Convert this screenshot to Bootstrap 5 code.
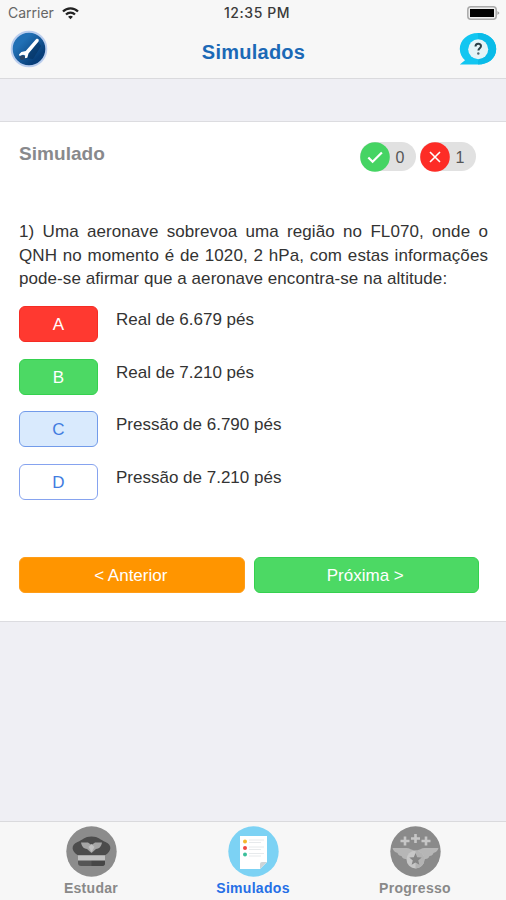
<!DOCTYPE html>
<html lang="pt-BR">
<head>
<meta charset="utf-8">
<meta name="viewport" content="width=device-width, initial-scale=1">
<title>Simulados</title>
<link href="https://cdn.jsdelivr.net/npm/bootstrap@5.3.0/dist/css/bootstrap.min.css" rel="stylesheet">
<style>
body{background:#efeff4;font-family:"Liberation Sans",Arial,sans-serif;font-size:17px;color:#333;height:900px;overflow:hidden}
svg{display:block;flex:none}
.top-area{height:79px;background:#f7f7f7;border-bottom:1px solid #dadadd}
.status-line{height:26px;padding:0 6px 0 8px;font-family:Inter,sans-serif;font-size:14px;line-height:26px}
.status-line .carrier{color:#666;width:46px}
.status-line .clock{width:70px;font-weight:500;color:#3a3a3a;letter-spacing:.55px;margin-left:6px}
.side{flex:1 1 0}
.title-line{height:52px;padding:0 9px 0 10px}
.title-line h1{font-size:20px;font-weight:700;color:#1b69b6;letter-spacing:.25px;line-height:52px}
.quiz{margin-top:42px;height:501px;background:#fff;border-top:1px solid #dcdce0;border-bottom:1px solid #dcdce0;padding:0 18px 0 19px}
.quiz-head{height:70px;padding-right:12px}
.quiz-head h2{font-size:19px;font-weight:700;color:#88898c;line-height:64px;letter-spacing:.05px}
.score{width:56px;height:29px;background:#e1e1e1;font-size:16px;margin-top:20px;color:#555}
.score span{flex:1;text-align:center;padding:2px 6px 0 0}
.question{margin:28px 0 15.500px;line-height:23.500px;text-align:justify;letter-spacing:.07px}
.answer{height:36px;margin-bottom:16.700px}
.answer p{line-height:27px;margin-left:18px}
.btn{--bs-btn-padding-y:0;--bs-btn-padding-x:0;--bs-btn-font-size:17px;--bs-btn-border-radius:6px;--bs-btn-color:#fff;height:36px;line-height:36px}
.answer .btn{width:79px}
.b-red{--bs-btn-bg:#ff3930;--bs-btn-border-color:#f52c24}
.b-green{--bs-btn-bg:#4cd964;--bs-btn-border-color:#35d14f}
.b-pick{--bs-btn-bg:#d9eafd;--bs-btn-border-color:#729bea;--bs-btn-color:#427ce0}
.b-line{--bs-btn-bg:#fff;--bs-btn-border-color:#86a3ef;--bs-btn-color:#427ce0}
.b-orange{--bs-btn-bg:#ff9500;--bs-btn-border-color:#ff9d18}
.pager{margin-top:57px;gap:9px;padding-right:9px}
.pager .btn{flex:1;padding-right:2px}
.tabs{height:79px;background:#f7f7f7;border-top:1px solid #dadadd;padding:4px 10px 0}
.tab{width:162px;font-size:14px;font-weight:700;letter-spacing:.3px;color:#898989;text-decoration:none;line-height:16px}
.tab span{margin-top:3px}
.tab.on{color:#256fe6}
</style>
</head>
<body class="d-flex flex-column">
<header class="top-area flex-shrink-0">
  <div class="status-line d-flex align-items-center">
    <div class="side d-flex align-items-center gap-2"><span class="carrier">Carrier</span>
      <svg width="17" height="13" viewBox="0 0 17 13" fill="none" stroke="#222" stroke-width="2.2"><path d="M1 4.6C5 .3 12 .3 16 4.6M4 7.5c2.5-2.6 6.500-2.600 9 0"/><path d="M8.500 12.300 6.100 9.800c1.300-1.300 3.500-1.300 4.800 0z" fill="#222" stroke="none"/></svg>
    </div>
    <div class="clock text-center text-nowrap">12:35 PM</div>
    <div class="side d-flex justify-content-end">
      <svg width="33" height="14" viewBox="0 0 33 14"><rect x=".8" y=".8" width="28.400" height="12.400" rx="3" fill="#eee" stroke="#aaa" stroke-width="1.500"/><rect x="3" y="3" width="24" height="8" fill="#000"/><path d="M30.500 5v4l2-2z" fill="#999"/></svg>
    </div>
  </div>
  <div class="title-line d-flex align-items-center">
    <div class="side">
      <svg width="38" height="38" viewBox="0 0 38 38" style="margin-top:-6px"><defs><linearGradient id="disc" x2="1" y2="1"><stop offset=".3" stop-color="#2170b5"/><stop offset=".75" stop-color="#073e79"/></linearGradient></defs><circle cx="19" cy="19" r="17.300" fill="url(#disc)" stroke="#b9cdee" stroke-width="2"/><path d="M28 11.500 31 16l-8 13-9-1z" fill="#06315f" opacity=".55"/><path d="M26 9.300c1.600-1.200 3.600.3 2.500 2.200L18.500 23.600l-1.200 4.200-2.600.4.500-2.600-2.200-.9-3.400 1.300-.6-1.600 2.400-2.500 4.300-.9z" fill="#fff"/><path d="m9.300 27 3-1.800 2.800 1.600-.6 2.700-3.700.5z" fill="#2c4564"/></svg>
    </div>
    <h1 class="m-0">Simulados</h1>
    <div class="side d-flex justify-content-end">
      <svg width="38" height="34" viewBox="0 0 38 34" style="margin-top:-6px"><path d="M19 1C8.500 1 .8 8 .8 17c0 4.500 2 8.500 5.200 11.200L.8 32.500H19c10.500 0 18.200-6.500 18.200-15.500S29.500 1 19 1" fill="#12c6f1"/><path d="M19 1c10.500 0 18.200 7 18.200 16S29.500 32.500 19 32.500z" fill="#0abbe8"/><circle cx="19.200" cy="17.200" r="10" fill="#e5f4f7"/><path d="M16.500 14.500c0-3.500 5.500-3.500 5.500-.5 0 2.200-2.600 2.200-2.600 4.500" fill="none" stroke="#2c4047" stroke-width="2"/><circle cx="19.300" cy="21.500" r="1.200" fill="#52676d"/></svg>
    </div>
  </div>
</header>

<main class="quiz flex-shrink-0">
  <div class="quiz-head d-flex align-items-start">
    <h2 class="m-0 me-auto">Simulado</h2>
    <div class="score rounded-pill d-flex align-items-center me-1">
      <svg width="30" height="30" viewBox="0 0 30 30"><circle cx="15" cy="15" r="14.800" fill="#45d463"/><path d="m8.300 15.500 4.300 4.300 9.300-9.300" fill="none" stroke="#fff" stroke-width="2.200"/></svg><span>0</span>
    </div>
    <div class="score rounded-pill d-flex align-items-center">
      <svg width="30" height="30" viewBox="0 0 30 30"><circle cx="15" cy="15" r="14.800" fill="#fd2c26"/><path d="m10 10 10 10m0-10L10 20" stroke="#fff" stroke-width="1.600"/></svg><span>1</span>
    </div>
  </div>
  <p class="question">1) Uma aeronave sobrevoa uma região no FL070, onde o QNH no momento é de 1020, 2 hPa, com estas informações pode-se afirmar que a aeronave encontra-se na altitude:</p>
  <div class="answer d-flex"><button type="button" class="btn b-red">A</button><p class="mb-0">Real de 6.679 pés</p></div>
  <div class="answer d-flex"><button type="button" class="btn b-green">B</button><p class="mb-0">Real de 7.210 pés</p></div>
  <div class="answer d-flex"><button type="button" class="btn b-pick">C</button><p class="mb-0">Pressão de 6.790 pés</p></div>
  <div class="answer d-flex"><button type="button" class="btn b-line">D</button><p class="mb-0">Pressão de 7.210 pés</p></div>
  <div class="pager d-flex"><button type="button" class="btn b-orange">&lt; Anterior</button><button type="button" class="btn b-green">Próxima &gt;</button></div>
</main>

<nav class="tabs d-flex mt-auto flex-shrink-0">
  <a class="tab d-flex flex-column align-items-center" href="#">
    <svg width="51" height="51" viewBox="0 0 51 51"><circle cx="25.500" cy="25.500" r="25.200" fill="#8c8c8c"/><path d="M25.500 10.500c7 0 9 3.500 14 5.500 7 3 6 9 0 13h-28c-6-4-7-10 0-13 5-2 7-5.500 14-5.500" fill="#4c4c4c"/><path d="M12 34h27v3c0 2-1 3-3 3H15c-2 0-3-1-3-3z" fill="#555"/><path d="M25.500 34H39v3c0 2-1 3-3 3H25.500z" fill="#464646"/><rect x="12" y="29.500" width="27" height="5" fill="#c2c2c2"/><path d="M15 16.500h7l3.500 2.500 3.500-2.500h7c-1 5-3 6-6 6.500L25.500 27 21 23c-3-.5-5-1.500-6-6.500" fill="#a5a5a5"/><path d="m25.500 18 3 3-3 5-3-5z" fill="#c1c1c1"/></svg>
    <span>Estudar</span></a>
  <a class="tab on d-flex flex-column align-items-center" href="#">
    <svg width="51" height="51" viewBox="0 0 51 51"><circle cx="25.500" cy="25.500" r="25.200" fill="#7cd2f4"/><path d="M12 10h27v26l-7 7H12z" fill="#fff"/><path d="M32 43v-5q0-2 2-2h5z" fill="#cdd4d7"/><path d="M21 14h15M21 16.500h12M21 21h15M21 23.500h12M21 27.500h15M21 30h12" stroke="#e7eaec"/><circle cx="17" cy="15.500" r="2" fill="#f5b82b"/><circle cx="17" cy="22" r="2" fill="#ef4a42"/><circle cx="17" cy="28.500" r="2" fill="#3bbf9a"/></svg>
    <span>Simulados</span></a>
  <a class="tab d-flex flex-column align-items-center" href="#">
    <svg width="51" height="51" viewBox="0 0 51 51"><circle cx="25.500" cy="25.500" r="25.200" fill="#8a8a8a"/><path d="M15 10.500v9M10.500 15h9M25.500 8v9M21 12.500h9M36 10.500v9M31.500 15h9" stroke="#c6c6c6" stroke-width="2.600"/><path d="M2.500 22h14c3 0 5 2 9 3 4-1 6-3 9-3h14q-1 4-5 5-1 3-4 3-1 3-4 3h-20q-3 0-4-3-3 0-4-3-4-1-5-5" fill="#b6b6b6"/><circle cx="25.500" cy="33.500" r="9" fill="#c7c7c7"/><path d="M25.500 24.500a9 9 0 0 1 0 18z" fill="#b3b3b3"/><path d="m25.500 27 1.700 4.200 4.500.3-3.500 2.900 1.200 4.400-3.900-2.400-3.900 2.400 1.200-4.400-3.500-2.900 4.500-.3z" fill="#858585"/></svg>
    <span>Progresso</span></a>
</nav>
<script src="https://cdn.jsdelivr.net/npm/bootstrap@5.3.0/dist/js/bootstrap.bundle.min.js"></script>
</body>
</html>
